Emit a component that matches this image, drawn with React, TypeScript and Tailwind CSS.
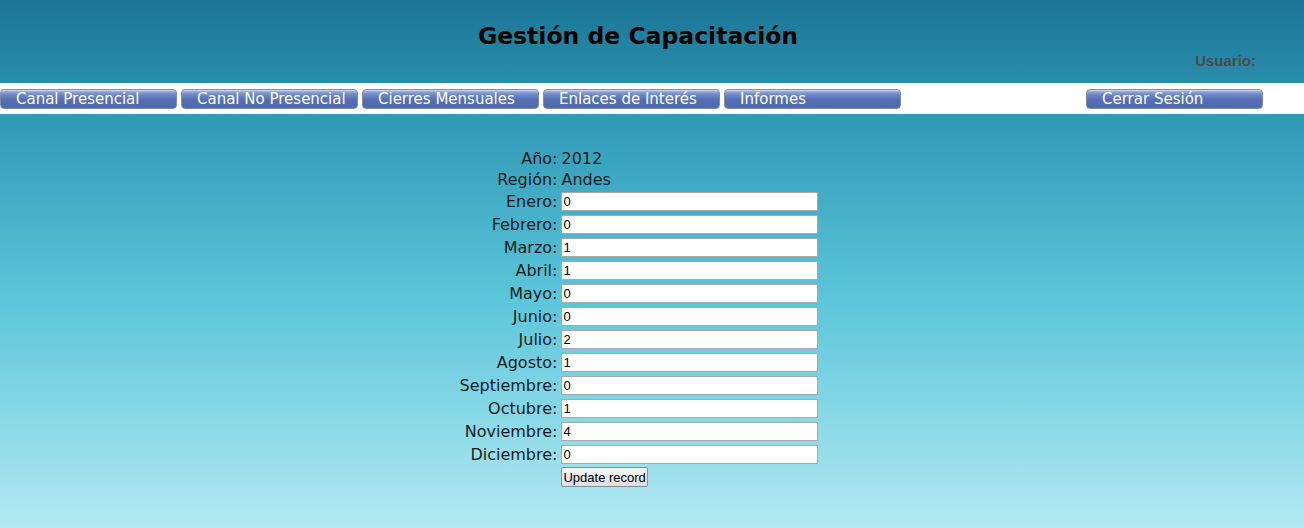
import React from "react";

const menu = ["Canal Presencial", "Canal No Presencial", "Cierres Mensuales", "Enlaces de Interés", "Informes"];

const months: [string, string][] = [
  ["Enero", "0"],
  ["Febrero", "0"],
  ["Marzo", "1"],
  ["Abril", "1"],
  ["Mayo", "0"],
  ["Junio", "0"],
  ["Julio", "2"],
  ["Agosto", "1"],
  ["Septiembre", "0"],
  ["Octubre", "1"],
  ["Noviembre", "4"],
  ["Diciembre", "0"],
];

function MenuButton({ label }: { label: string }) {
  return (
    <div className="w-[177px] h-[20px] rounded-[4px] border border-[#7d8ea6] bg-[linear-gradient(to_bottom,#a9bde6_0%,#6f88c8_25%,#566fb4_55%,#5069ae_100%)] flex items-end pb-[1px] pl-[15px] text-white text-[15px] leading-[16px] font-['DejaVu_Sans',sans-serif] shadow-[inset_0_1px_0_rgba(255,255,255,0.4)]">
      {label}
    </div>
  );
}

export default function App() {
  return (
    <div className="w-[1304px] h-[528px] overflow-hidden bg-[linear-gradient(to_bottom,#1b7696_0%,#2a8dab_16%,#2f99b6_22%,#5cc6da_57%,#b3eaf2_100%)] font-['DejaVu_Sans',sans-serif]">
      <div className="w-[1276px] h-[83px] relative">
        <div className="pt-[20px] text-center text-[23.5px] font-bold text-black leading-[32px]">Gestión de Capacitación</div>
        <div className="absolute right-[20px] top-[50px] text-[15px] font-bold text-[#4a4a4a] font-['Liberation_Sans',sans-serif]">Usuario:</div>
      </div>
      <div className="h-[31px] bg-white flex items-center">
        <div className="flex gap-[4px]">
          {menu.map((m) => (
            <MenuButton key={m} label={m} />
          ))}
        </div>
        <div className="ml-[185px]">
          <MenuButton label="Cerrar Sesión" />
        </div>
      </div>
      <div className="w-[1278px] flex justify-center pt-[34px]">
        <div className="grid grid-cols-[auto_auto] gap-x-[4px] text-[16px] text-[#1c1c1c] items-center">
          <div className="text-right h-[22px] leading-[22px]">Año:</div>
          <div className="h-[22px] leading-[22px]">2012</div>
          <div className="text-right h-[20px] leading-[20px]">Región:</div>
          <div className="h-[20px] leading-[20px]">Andes</div>
          {months.map(([m, v]) => (
            <React.Fragment key={m}>
              <div className="text-right h-[23px] leading-[23px]">{m}:</div>
              <div className="h-[23px] flex items-center">
                <input
                  readOnly
                  value={v}
                  className="w-[257px] h-[19px] bg-white border border-[#a9a9a9] px-[1px] text-[13px] text-black font-['Liberation_Sans',sans-serif] outline-none"
                />
              </div>
            </React.Fragment>
          ))}
          <div />
          <div className="pt-[1px] flex">
            <button className="h-[20px] px-[1px] border border-[#8c8c8c] rounded-[2px] bg-[linear-gradient(to_bottom,#f6f6f6,#dedede)] text-[13px] leading-none text-black font-['Liberation_Sans',sans-serif]">
              Update record
            </button>
          </div>
        </div>
      </div>
    </div>
  );
}
